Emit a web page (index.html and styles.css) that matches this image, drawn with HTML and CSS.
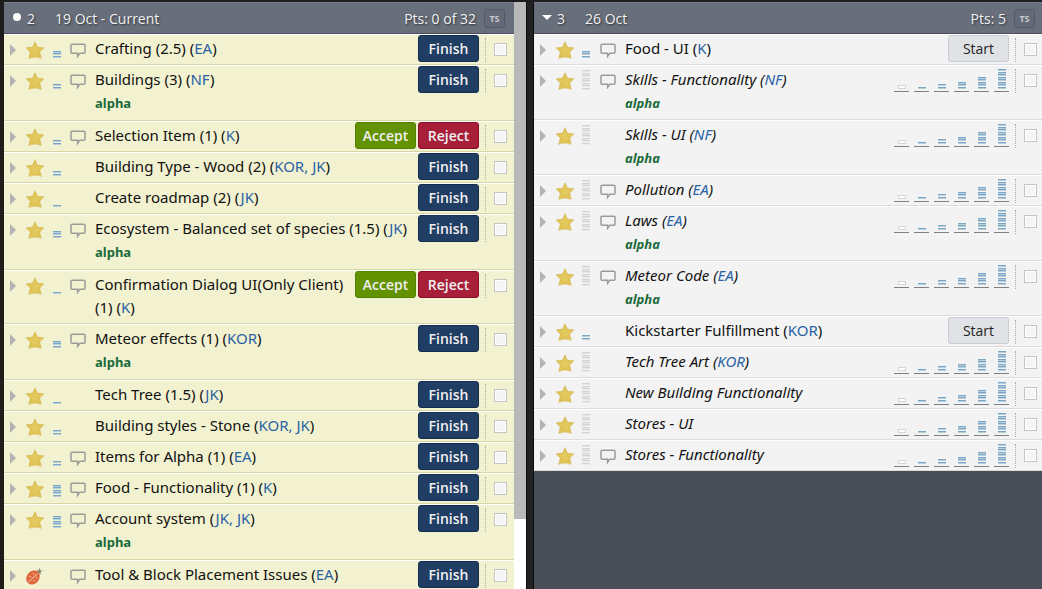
FILE: index.html
```html
<!DOCTYPE html>
<html lang="en">
<head>
<meta charset="utf-8">
<title>Iterations</title>
<link rel="stylesheet" href="styles.css">
</head>
<body>
<svg class="defs" aria-hidden="true">
  <symbol id="star" viewBox="0 0 18 17"><path d="M9 0.3 L11.5 5.7 L17.8 6.3 L13.7 10.6 L15.2 16.8 Q9 14 2.8 16.8 L4.3 10.6 L0.2 6.3 L6.5 5.7Z" fill="#e0c455" stroke="#d3b44d" stroke-width=".6"/><path d="M9 3 L10.5 7 L14.5 7.5 L11.5 10.5 L12 13 L9 12 L6 13 L7 10 L4 7.5 L8 7Z" fill="#e3ca5f"/></symbol>
  <symbol id="bug" viewBox="0 0 18 18"><ellipse cx="7" cy="10.500" rx="6.200" ry="7.600" transform="rotate(40 7 10.500)" fill="#e0683f"/><path d="M2.500 15 L11.500 6.500" stroke="#f6dcc0" stroke-width=".9"/><g fill="#f6cdb0"><circle cx="4" cy="9.500" r=".8"/><circle cx="7.500" cy="6.800" r=".8"/><circle cx="8" cy="13.500" r=".8"/><circle cx="10.500" cy="10.500" r=".8"/></g><path d="M10.500 2.500 L13 3.500 L13.500 0.500 L14.500 3.500 L17 3.500 L14.500 5 L15 7.500 L12.500 6Z" fill="#858578"/></symbol>
  <symbol id="talk" viewBox="0 0 16 15"><path d="M2 1.200H14Q15 1.200 15 2.200V9.200Q15 10.200 14 10.200H9.800L7.600 13.300V10.200H2Q1 10.200 1 9.200V2.200Q1 1.200 2 1.200Z" fill="none" stroke="#9b9b98" stroke-width="1.500"/></symbol>
</svg>
<main class="board">
  <section class="panel current">
    <header class="bar"><span class="dot"></span><span class="num">2</span><h2>19 Oct - Current</h2><span class="pts">Pts: 0 of 32</span><button class="ts" type="button">TS</button></header>
    <ul class="list" id="current"></ul>
  </section>
  <div class="scroll"><div class="thumb"></div></div>
  <div class="divider"></div>
  <section class="panel backlog">
    <header class="bar"><span class="caret"></span><span class="num">3</span><h2>26 Oct</h2><span class="pts">Pts: 5</span><button class="ts" type="button">TS</button></header>
    <ul class="list" id="backlog"></ul>
  </section>
</main>
<script src="board.js"></script>
</body>
</html>
```
FILE: styles.css
```css
* { box-sizing: border-box; }
body { margin: 0; height: 100vh; overflow: hidden; background: #484f57; font-family: "Noto Sans", "Open Sans", sans-serif; font-size: 15px; color: #111; }
.defs { display: none; }
.board { display: flex; height: 100%; border-top: 2px solid #1c1c1c; border-left: 4px solid #1f1d1b; }
.panel { flex: 1 1 0; min-width: 0; overflow: hidden; }
.current { flex-basis: 2px; }
.bar { display: flex; align-items: center; height: 32px; padding: 0 9px 0 8px; background: #686e7a; border-top: 1px solid #7a808a; border-bottom: 1px solid #4c4c60; color: #f2f2f2; font-family: "Open Sans", sans-serif; font-size: 14px; text-shadow: 1px 1px 2px #30343c; }
.backlog .bar { padding-right: 7px; }
.bar h2 { flex: 1; margin: 0; font-size: 14px; font-weight: 400; }
.dot { width: 8px; height: 8px; margin: 0 1px 3px; border-radius: 50%; background: #fff; }
.caret { width: 0; margin-bottom: 2px; border: 5px solid transparent; border-top-color: #fff; border-bottom: 0; }
.num { width: 28px; margin-left: 5px; }
.ts { width: 21px; height: 19px; margin-left: 8px; padding: 0; border: 1px solid #525a6c; border-radius: 3px; background: #636977; color: #c6c8cc; font: 700 9px "Open Sans", sans-serif; }
.list { margin: 0; padding: 0; list-style: none; }
.row { display: flex; align-items: flex-start; min-height: 31px; padding-right: 7px; border-top: 1px solid #fff; border-bottom: 1px solid #dcdcdc; background: #f3f3f3; }
.current .row { background: #f3f2d0; border-bottom-color: #d6d5a6; }
.backlog .row { padding-right: 5px; }
.expand { flex: none; width: 6px; height: 12px; margin: 9px 10px 0 6px; padding: 0; border: solid transparent; border-width: 6px 0 6px 6px; border-left-color: #b3b3b3; background: none; }
.kind { flex: none; width: 18px; height: 18px; margin-top: 6px; }
.points { flex: none; display: flex; flex-direction: column; justify-content: flex-end; width: 8px; height: 20px; margin: 3px 1px 0 8px; }
.points i, .scale i { flex: none; height: 2px; background: #b9d0d8; border-top: 1px solid #7aa7c7; }
.points i:nth-last-child(even), .scale i:nth-last-child(even) { margin-bottom: 1px; }
.points.none { height: 21px; }
.points.none i { background: #e8e8e8; border-color: #d2d2d2; }
.current .points { margin: 3px 0 0 9px; }
.note { flex: none; width: 16px; height: 15px; margin: 8px 0 0 9px; }
.text { flex: 1; min-width: 0; padding: 2px 0 4px 9px; }
.title { margin: 0; line-height: 23px; }
.title a, .title a:visited { color: #2a62a4; text-decoration: none; }
.idle .text { font-style: italic; }
.label { display: block; color: #1a6a3a; font-size: 13px; font-weight: 700; line-height: 25px; text-decoration: none; }
.idle .label { line-height: 24px; }
.actions { display: flex; gap: 2px; margin-left: 8px; }
.btn { width: 61px; height: 27px; padding: 0; border: 1px solid #172d50; border-radius: 3px; background: #203e64; color: #f0f0f0; font: 600 14px "Open Sans", sans-serif; }
.accept { border-color: #4f8200; background: #629200; }
.reject { border-color: #8c0c2a; background: #a71f39; }
.start { border-color: #c8ccd4; background: #e0e2e5; color: #222; font-weight: 500; }
.estimate { display: flex; gap: 5px; margin-left: 8px; padding-top: 3px; }
.scale { display: flex; flex-direction: column; align-items: center; justify-content: flex-end; width: 15px; height: 23px; padding: 0 0 2px; border: 0; border-bottom: 1px solid #808080; background: none; }
.scale i { width: 8px; }
.scale .zero { height: 4px; border: 1px solid #d4d4d4; background: #fff; }
.pick { flex: none; margin: 3px 0 0 6px; height: 24px; padding: 5px 0 0 8px; border-left: 1px dotted #aaa; }
.pick input { display: block; appearance: none; width: 13px; height: 13px; margin: 0; border: 1px solid #c4c4c4; background: #f5f5f5; box-shadow: inset 0 0 0 1px #fff; }
.scroll { flex: none; width: 12px; background: #fff; }
.thumb { height: 88%; background: #b9b9b9; }
.divider { flex: none; width: 8px; background: #222; border: solid #0b0b0b; border-width: 0 1px; }
```
FILE: board.js
```js
const current = [
  ["Crafting (2.5)", ["EA"], 3, 1], ["Buildings (3)", ["NF"], 2, 1, "alpha"],
  ["Selection Item (1)", ["K"], 2, 1, "", "review"], ["Building Type - Wood (2)", ["KOR", "JK"], 2, 0],
  ["Create roadmap (2)", ["JK"], 1, 0], ["Ecosystem - Balanced set of species (1.5)", ["JK"], 3, 1, "alpha"],
  ["Confirmation Dialog UI(Only Client) (1)", ["K"], 1, 1, "", "review"],
  ["Meteor effects (1)", ["KOR"], 3, 1, "alpha"], ["Tech Tree (1.5)", ["JK"], 1, 0],
  ["Building styles - Stone", ["KOR", "JK"], 2, 0], ["Items for Alpha (1)", ["EA"], 2, 1],
  ["Food - Functionality (1)", ["K"], 5, 1], ["Account system", ["JK", "JK"], 5, 1, "alpha"],
  ["Tool & Block Placement Issues", ["EA"], 0, 1, "", "bug"]
];
const backlog = [
  ["Food - UI", ["K"], 3, 1, "", "start"], ["Skills - Functionality", ["NF"], 0, 1, "alpha"],
  ["Skills - UI", ["NF"], 0, 0, "alpha"], ["Pollution", ["EA"], 0, 1], ["Laws", ["EA"], 0, 1, "alpha"],
  ["Meteor Code", ["EA"], 0, 1, "alpha"], ["Kickstarter Fulfillment", ["KOR"], 2, 0, "", "start"],
  ["Tech Tree Art", ["KOR"], 0, 0], ["New Building Functionality", [], 0, 0],
  ["Stores - UI", [], 0, 0], ["Stores - Functionality", [], 0, 1]
];
const bars = n => "<i></i>".repeat(n);
const button = (name, cls) => `<button type="button" class="btn ${cls}">${name}</button>`;
const scale = n => `<button type="button" class="scale" aria-label="${n} points">${n ? bars(n) : '<i class="zero"></i>'}</button>`;
function row([title, owners, pts, note, label, kind], side) {
  const idle = side === "backlog" && kind !== "start";
  const people = owners.map(o => `<a href="#${o}">${o}</a>`).join('<a href="#">, </a>');
  let actions = `<div class="actions">${button("Finish", "")}</div>`;
  if (kind === "review") actions = `<div class="actions">${button("Accept", "accept")}${button("Reject", "reject")}</div>`;
  if (kind === "start") actions = `<div class="actions">${button("Start", "start")}</div>`;
  if (idle) actions = `<div class="estimate">${[0, 1, 2, 3, 5, 8].map(scale).join("")}</div>`;
  return `<li class="row ${idle ? "idle" : ""}"><button type="button" class="expand" aria-label="Expand"></button>
    <svg class="kind"><use href="#${kind === "bug" ? "bug" : "star"}"/></svg>
    <div class="points ${idle ? "none" : ""}">${bars(idle ? 8 : pts)}</div>
    <svg class="note">${note ? '<use href="#talk"/>' : ""}</svg>
    <div class="text"><p class="title">${title.replace("&", "&amp;")}${people ? ` (${people})` : ""}</p>${label ? `<a class="label" href="#alpha">${label}</a>` : ""}</div>
    ${actions}<label class="pick"><input type="checkbox" aria-label="Select story"></label></li>`;
}
document.getElementById("current").innerHTML = current.map(r => row(r, "current")).join("");
document.getElementById("backlog").innerHTML = backlog.map(r => row(r, "backlog")).join("");
```
